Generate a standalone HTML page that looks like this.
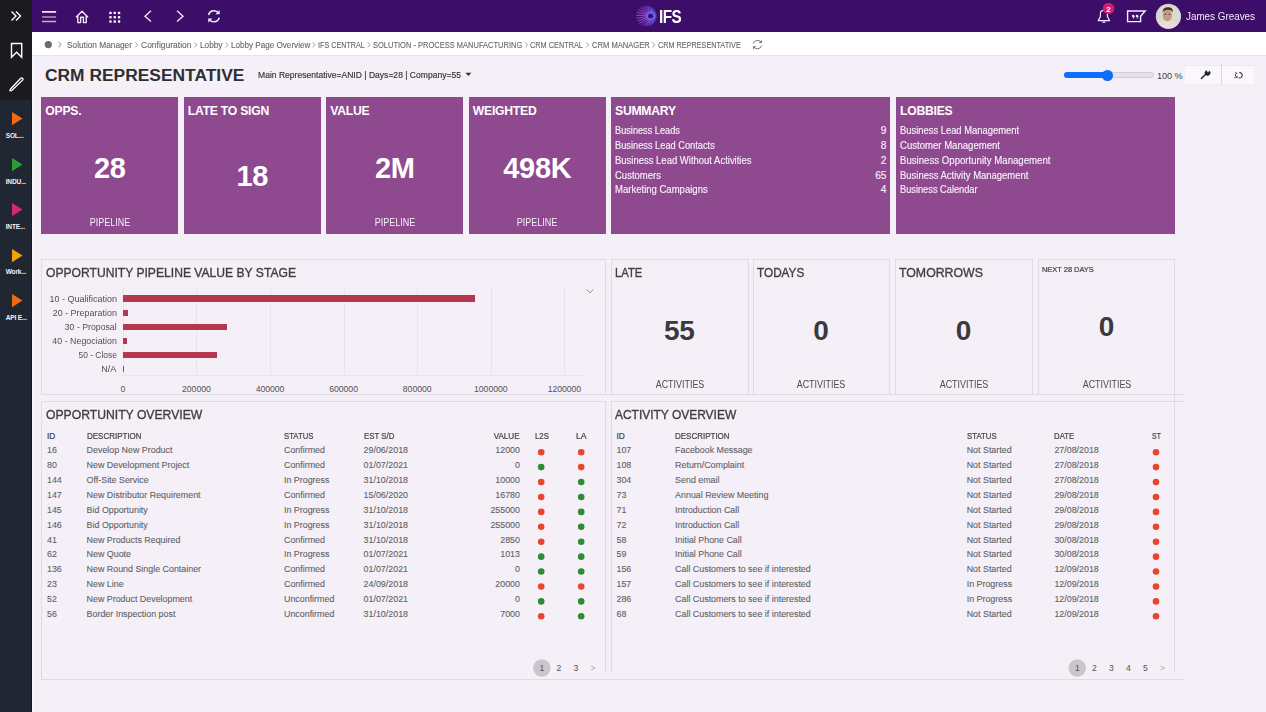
<!DOCTYPE html>
<html><head><meta charset="utf-8"><style>
*{margin:0;padding:0;box-sizing:border-box}
html,body{width:1266px;height:712px;overflow:hidden;background:#f5f0f7;font-family:"Liberation Sans",sans-serif;position:relative}
.t{position:absolute;white-space:nowrap}
.r{position:absolute}
svg{position:absolute;overflow:visible}
</style></head><body>
<div class="r" style="left:0px;top:0px;width:32px;height:712px;background:#202733;"></div>
<div class="r" style="left:31px;top:0px;width:1px;height:712px;background:#161a21;"></div>
<div class="r" style="left:0px;top:0px;width:32px;height:100px;background:#1b1b1f;"></div>
<div class="r" style="left:32px;top:0px;width:2px;height:712px;background:#f7f6f9;"></div>
<svg style="left:0;top:0" width="32" height="32"><path d="M11.5 11.5 L16 16 L11.5 20.5 M16 11.5 L20.5 16 L16 20.5" stroke="#fff" stroke-width="1.4" fill="none"/></svg>
<svg style="left:0;top:30px" width="32" height="40"><path d="M11.5 13.5 H21.7 V27.3 L16.6 22.2 L11.5 27.3 Z" stroke="#fff" stroke-width="1.4" fill="none" stroke-linejoin="miter"/></svg>
<svg style="left:0;top:70px" width="32" height="30"><path d="M10.5 19 L20.5 8.5 Q22 7.3 22.8 8.3 Q23.5 9.3 22.3 10.4 L12 20.3 L9.8 20.9 Z" stroke="#fff" stroke-width="1.3" fill="none" stroke-linejoin="round"/></svg>
<svg style="left:0;top:112.0px" width="32" height="14"><path d="M12 0 L22.5 6.6 L12 13.3 Z" fill="#f46a0f"/></svg>
<div class="t" style="top:133.00px;font-size:6.6px;line-height:6.6px;color:#f0f0f0;font-weight:bold;letter-spacing:-0.2px;left:5.70px;">SOL...</div>
<svg style="left:0;top:157.6px" width="32" height="14"><path d="M12 0 L22.5 6.6 L12 13.3 Z" fill="#2f9a3a"/></svg>
<div class="t" style="top:179.00px;font-size:6.6px;line-height:6.6px;color:#f0f0f0;font-weight:bold;letter-spacing:-0.2px;left:5.70px;">INDU...</div>
<svg style="left:0;top:203.2px" width="32" height="14"><path d="M12 0 L22.5 6.6 L12 13.3 Z" fill="#cc2a72"/></svg>
<div class="t" style="top:224.00px;font-size:6.6px;line-height:6.6px;color:#f0f0f0;font-weight:bold;letter-spacing:-0.2px;left:5.70px;">INTE...</div>
<svg style="left:0;top:248.8px" width="32" height="14"><path d="M12 0 L22.5 6.6 L12 13.3 Z" fill="#f3a20c"/></svg>
<div class="t" style="top:269.00px;font-size:6.6px;line-height:6.6px;color:#f0f0f0;font-weight:bold;letter-spacing:-0.2px;left:5.70px;">Work...</div>
<svg style="left:0;top:294.4px" width="32" height="14"><path d="M12 0 L22.5 6.6 L12 13.3 Z" fill="#f26a10"/></svg>
<div class="t" style="top:315.00px;font-size:6.6px;line-height:6.6px;color:#f0f0f0;font-weight:bold;letter-spacing:-0.2px;left:5.70px;">API E...</div>
<div class="r" style="left:32px;top:0px;width:1234px;height:32px;background:#3c0e6a;"></div>
<svg style="left:0;top:0" width="70" height="32"><path d="M42 11.9 H56.1" stroke="#efdefa" stroke-width="1.8"/><path d="M42 17 H56.1" stroke="#9580ad" stroke-width="1.8"/><path d="M42 21.5 H56.1" stroke="#c9a9e4" stroke-width="1.5"/></svg>
<svg style="left:0;top:0" width="100" height="32"><path d="M76 17.3 L82 11.2 L88 17.3 M77.8 15.8 V22.6 H80.6 V17.2 H83.4 V22.6 H86.2 V15.8" stroke="#f2ecf8" stroke-width="1.4" fill="none" stroke-linejoin="round"/></svg>
<svg style="left:0;top:0" width="130" height="32"><rect x="109.3" y="11.8" width="2.3" height="2.3" fill="#fff"/><rect x="113.6" y="11.8" width="2.3" height="2.3" fill="#fff"/><rect x="117.9" y="11.8" width="2.3" height="2.3" fill="#fff"/><rect x="109.3" y="16.1" width="2.3" height="2.3" fill="#fff"/><rect x="113.6" y="16.1" width="2.3" height="2.3" fill="#fff"/><rect x="117.9" y="16.1" width="2.3" height="2.3" fill="#fff"/><rect x="109.3" y="20.4" width="2.3" height="2.3" fill="#fff"/><rect x="113.6" y="20.4" width="2.3" height="2.3" fill="#fff"/><rect x="117.9" y="20.4" width="2.3" height="2.3" fill="#fff"/></svg>
<svg style="left:0;top:0" width="200" height="32"><path d="M151 10.8 L145 16.2 L151 21.6" stroke="#eee6f6" stroke-width="1.4" fill="none"/><path d="M177 10.8 L183 16.2 L177 21.6" stroke="#eee6f6" stroke-width="1.4" fill="none"/></svg>
<svg style="left:0;top:0" width="230" height="32"><path d="M208.5 15 A5.6 5.6 0 0 1 218.6 13.3 M219.3 17.6 A5.6 5.6 0 0 1 209.2 19.3" stroke="#f0e8f8" stroke-width="1.5" fill="none"/><path d="M219.6 10 V14.2 H215.4 Z" fill="#f0e8f8"/><path d="M208.2 22.6 V18.4 H212.4 Z" fill="#f0e8f8"/></svg>
<svg style="left:0;top:0" width="700" height="32"><line x1="653.20" y1="16.13" x2="656.50" y2="16.30" stroke="#5f6aee" stroke-width="0.9"/><line x1="653.11" y1="16.67" x2="656.38" y2="17.54" stroke="#5f6aee" stroke-width="0.9"/><line x1="652.92" y1="17.17" x2="656.11" y2="18.79" stroke="#5f6aee" stroke-width="0.9"/><line x1="652.62" y1="17.63" x2="655.65" y2="20.07" stroke="#5f6aee" stroke-width="0.9"/><line x1="652.24" y1="18.02" x2="654.97" y2="21.37" stroke="#5f6aee" stroke-width="0.9"/><line x1="651.79" y1="18.31" x2="654.02" y2="22.67" stroke="#5f6aee" stroke-width="0.9"/><line x1="651.28" y1="18.51" x2="652.74" y2="23.91" stroke="#7a58ea" stroke-width="0.9"/><line x1="650.74" y1="18.60" x2="651.09" y2="25.00" stroke="#7a58ea" stroke-width="0.9"/><line x1="650.20" y1="18.57" x2="649.07" y2="25.82" stroke="#7a58ea" stroke-width="0.9"/><line x1="649.67" y1="18.43" x2="646.72" y2="26.19" stroke="#9a4ee8" stroke-width="0.9"/><line x1="649.19" y1="18.18" x2="644.16" y2="25.97" stroke="#9a4ee8" stroke-width="0.9"/><line x1="648.77" y1="17.84" x2="641.59" y2="25.05" stroke="#9a4ee8" stroke-width="0.9"/><line x1="648.42" y1="17.42" x2="639.27" y2="23.39" stroke="#9a4ee8" stroke-width="0.9"/><line x1="648.17" y1="16.94" x2="637.46" y2="21.08" stroke="#9a4ee8" stroke-width="0.9"/><line x1="648.03" y1="16.41" x2="636.36" y2="18.29" stroke="#9a4ee8" stroke-width="0.9"/><line x1="648.00" y1="15.87" x2="636.13" y2="15.28" stroke="#9a4ee8" stroke-width="0.9"/><line x1="648.09" y1="15.33" x2="636.78" y2="12.33" stroke="#9a4ee8" stroke-width="0.9"/><line x1="648.28" y1="14.83" x2="638.25" y2="9.74" stroke="#9a4ee8" stroke-width="0.9"/><line x1="648.58" y1="14.37" x2="640.33" y2="7.73" stroke="#9a4ee8" stroke-width="0.9"/><line x1="648.96" y1="13.98" x2="642.80" y2="6.42" stroke="#9a4ee8" stroke-width="0.9"/><line x1="649.41" y1="13.69" x2="645.39" y2="5.84" stroke="#9a4ee8" stroke-width="0.9"/><line x1="649.92" y1="13.49" x2="647.87" y2="5.92" stroke="#7a58ea" stroke-width="0.9"/><line x1="650.46" y1="13.40" x2="650.08" y2="6.53" stroke="#7a58ea" stroke-width="0.9"/><line x1="651.00" y1="13.43" x2="651.93" y2="7.49" stroke="#7a58ea" stroke-width="0.9"/><line x1="651.53" y1="13.57" x2="653.39" y2="8.67" stroke="#5f6aee" stroke-width="0.9"/><line x1="652.01" y1="13.82" x2="654.51" y2="9.95" stroke="#5f6aee" stroke-width="0.9"/><line x1="652.43" y1="14.16" x2="655.33" y2="11.25" stroke="#5f6aee" stroke-width="0.9"/><line x1="652.78" y1="14.58" x2="655.90" y2="12.54" stroke="#5f6aee" stroke-width="0.9"/><line x1="653.03" y1="15.06" x2="656.26" y2="13.81" stroke="#5f6aee" stroke-width="0.9"/><line x1="653.17" y1="15.59" x2="656.46" y2="15.06" stroke="#5f6aee" stroke-width="0.9"/><circle cx="650.6" cy="16" r="3.6" fill="none" stroke="#6468ee" stroke-width="1.6"/><circle cx="650.6" cy="16" r="2.1" fill="#3c0e6a"/></svg>
<div class="t" style="top:8.00px;font-size:18px;line-height:18px;color:#fff;font-weight:bold;letter-spacing:-0.6px;left:659.00px;transform:scaleX(0.85);transform-origin:0 0;">IFS</div>
<svg style="left:0;top:0" width="1266" height="32"><path d="M1098.2 20.7 H1109.6 L1107.4 16.5 V13.6 Q1107.4 10.3 1103.9 10.3 Q1100.4 10.3 1100.4 13.6 V16.5 Z" stroke="#f4eefa" stroke-width="1.2" fill="none" stroke-linejoin="round"/><path d="M1102.4 21.6 Q1103.9 23.4 1105.4 21.6" stroke="#f4eefa" stroke-width="1.1" fill="none"/></svg>
<svg style="left:0;top:0" width="1266" height="32"><circle cx="1108.6" cy="8.5" r="5.8" fill="#d11f6e"/></svg>
<div class="t" style="top:6.00px;font-size:8px;line-height:8px;color:#fff;font-weight:bold;left:908.40px;width:400px;text-align:center;">2</div>
<svg style="left:0;top:0" width="1266" height="32"><path d="M1127.6 11 H1145.2 L1140.6 16.3 V21.6 H1127.6 Z" stroke="#f4eefa" stroke-width="1.4" fill="none"/><circle cx="1133.2" cy="16" r="1.25" fill="#f4eefa"/><circle cx="1137" cy="16" r="1.25" fill="#f4eefa"/><path d="M1134.3 16 L1133.4 18.6 M1138.1 16 L1137.2 18.6" stroke="#f4eefa" stroke-width="0.9"/></svg>
<svg style="left:0;top:0" width="1266" height="32"><defs><clipPath id="avc"><circle cx="1168.4" cy="16.4" r="12.2"/></clipPath><filter id="bl"><feGaussianBlur stdDeviation="0.7"/></filter></defs><circle cx="1168.4" cy="16.4" r="12.6" fill="#b9a9d6"/><g clip-path="url(#avc)"><rect x="1155" y="3" width="27" height="27" fill="#dcd8d0"/><g filter="url(#bl)"><rect x="1174" y="4" width="8" height="22" fill="#d6dcd2"/><ellipse cx="1167.3" cy="15.2" rx="4.6" ry="6" fill="#c49a88"/><path d="M1162.6 12.5 Q1162.5 7.3 1168 7.2 Q1173.5 7.3 1172.7 12.5 Q1171.5 9.8 1168 9.7 Q1164 9.8 1162.6 12.5Z" fill="#4a2e22"/><ellipse cx="1165.5" cy="14.2" rx="1" ry="0.6" fill="#5a3a30"/><ellipse cx="1169.5" cy="14.2" rx="1" ry="0.6" fill="#5a3a30"/><path d="M1157 32 Q1157 22.5 1163 20.5 L1167.5 22.5 L1172 20.5 Q1179 22.5 1179 32Z" fill="#ecdcd6"/></g></g></svg>
<div class="t" style="top:11.00px;font-size:10.8px;line-height:10.8px;color:#f2ecf8;left:1186.00px;transform:scaleX(0.9126);transform-origin:0 0;">James Greaves</div>
<div class="r" style="left:32px;top:32px;width:1234px;height:23px;background:#ffffff;"></div>
<div class="r" style="left:32px;top:55px;width:1234px;height:1px;background:#e6e3ea;"></div>
<svg style="left:0;top:0" width="100" height="60"><circle cx="48.3" cy="44.6" r="3.6" fill="#6b6b6f"/><path d="M58.5 42 L61.2 44.6 L58.5 47.2" stroke="#777" stroke-width="0.9" fill="none"/></svg>
<div class="t" style="top:41.00px;font-size:8.3px;line-height:8.3px;color:#666;left:67.00px;-webkit-text-stroke:0.1px currentColor;transform:scaleX(0.9993);transform-origin:0 0;">Solution Manager</div>
<div class="t" style="top:41.00px;font-size:8.3px;line-height:8.3px;color:#666;left:140.70px;-webkit-text-stroke:0.1px currentColor;transform:scaleX(1.0231);transform-origin:0 0;">Configuration</div>
<div class="t" style="top:41.00px;font-size:8.3px;line-height:8.3px;color:#666;left:200.00px;-webkit-text-stroke:0.1px currentColor;transform:scaleX(0.9952);transform-origin:0 0;">Lobby</div>
<div class="t" style="top:41.00px;font-size:8.3px;line-height:8.3px;color:#666;left:230.80px;-webkit-text-stroke:0.1px currentColor;transform:scaleX(0.9769);transform-origin:0 0;">Lobby Page Overview</div>
<div class="t" style="top:41.00px;font-size:8.3px;line-height:8.3px;color:#666;left:317.70px;-webkit-text-stroke:0.1px currentColor;transform:scaleX(0.8674);transform-origin:0 0;">IFS CENTRAL</div>
<div class="t" style="top:41.00px;font-size:8.3px;line-height:8.3px;color:#666;left:373.00px;-webkit-text-stroke:0.1px currentColor;transform:scaleX(0.9047);transform-origin:0 0;">SOLUTION - PROCESS MANUFACTURING</div>
<div class="t" style="top:41.00px;font-size:8.3px;line-height:8.3px;color:#666;left:530.30px;-webkit-text-stroke:0.1px currentColor;transform:scaleX(0.8826);transform-origin:0 0;">CRM CENTRAL</div>
<div class="t" style="top:41.00px;font-size:8.3px;line-height:8.3px;color:#666;left:591.80px;-webkit-text-stroke:0.1px currentColor;transform:scaleX(0.9152);transform-origin:0 0;">CRM MANAGER</div>
<div class="t" style="top:41.00px;font-size:8.3px;line-height:8.3px;color:#666;left:657.50px;-webkit-text-stroke:0.1px currentColor;transform:scaleX(0.8747);transform-origin:0 0;">CRM REPRESENTATIVE</div>
<svg style="left:0;top:0" width="1266" height="60"><path d="M135.2 42.2 L137.7 44.8 L135.2 47.4" stroke="#888" stroke-width="0.8" fill="none"/><path d="M194.4 42.2 L196.9 44.8 L194.4 47.4" stroke="#888" stroke-width="0.8" fill="none"/><path d="M225.5 42.2 L228.0 44.8 L225.5 47.4" stroke="#888" stroke-width="0.8" fill="none"/><path d="M312.7 42.2 L315.2 44.8 L312.7 47.4" stroke="#888" stroke-width="0.8" fill="none"/><path d="M367.6 42.2 L370.1 44.8 L367.6 47.4" stroke="#888" stroke-width="0.8" fill="none"/><path d="M525.1 42.2 L527.6 44.8 L525.1 47.4" stroke="#888" stroke-width="0.8" fill="none"/><path d="M586.3 42.2 L588.8 44.8 L586.3 47.4" stroke="#888" stroke-width="0.8" fill="none"/><path d="M652.3 42.2 L654.8 44.8 L652.3 47.4" stroke="#888" stroke-width="0.8" fill="none"/></svg>
<svg style="left:0;top:0" width="800" height="60"><path d="M753.2 43.6 A4.3 4.3 0 0 1 761 42.4 M761.6 45.6 A4.3 4.3 0 0 1 753.8 46.8" stroke="#777" stroke-width="1" fill="none"/><path d="M761.9 39.8 V43 H758.7 Z" fill="#777"/><path d="M753 49.4 V46.2 H756.2 Z" fill="#777"/></svg>
<div class="t" style="top:67.00px;font-size:17.4px;line-height:17.4px;color:#2e2e30;font-weight:bold;left:45.00px;">CRM REPRESENTATIVE</div>
<div class="t" style="top:71.00px;font-size:8.6px;line-height:8.6px;color:#333;left:258.40px;-webkit-text-stroke:0.15px currentColor;transform:scaleX(0.9956);transform-origin:0 0;">Main Representative=ANID | Days=28 | Company=55</div>
<svg style="left:0;top:0" width="500" height="90"><path d="M465.4 72.8 H471.4 L468.4 76 Z" fill="#333"/></svg>
<div class="r" style="left:1064px;top:72px;width:90px;height:6px;background:#e4e2e8;border-radius:3px;border:1px solid #d2d0d6;"></div>
<div class="r" style="left:1064px;top:72px;width:44px;height:6px;background:#0d6efd;border-radius:3px;"></div>
<div class="r" style="left:1102px;top:70px;width:10.5px;height:10.5px;background:#0d6efd;border-radius:50%;"></div>
<div class="t" style="top:72.00px;font-size:9.2px;line-height:9.2px;color:#444;letter-spacing:-0.1px;left:1157.00px;">100 %</div>
<div class="r" style="left:1185px;top:65px;width:69px;height:19.5px;background:#faf8fb;border-top:1px solid #ebe8ee;border-bottom:1px solid #efedf1;"></div>
<div class="r" style="left:1221px;top:64px;width:1px;height:21px;background:#dcd9de;"></div>
<svg style="left:0;top:0" width="1266" height="90"><path d="M1201.4 78.6 L1206.2 73.8" stroke="#222" stroke-width="1.4" stroke-linecap="round"/><path d="M1205.6 74.6 A2.5 2.5 0 0 1 1206.5 70.6 L1207.3 72.6 L1209 72.2 L1209.4 70.9 A2.5 2.5 0 0 1 1205.6 74.6 Z" fill="#222" stroke="#222" stroke-width="0.6" stroke-linejoin="round"/></svg>
<svg style="left:0;top:0" width="1266" height="90"><path d="M1239.3 72.6 A2.7 2.7 0 1 1 1238.6 77.8" stroke="#3a3a3a" stroke-width="1.1" fill="none"/><path d="M1237.2 73.2 A1.9 1.9 0 0 0 1236.6 76.9 H1238" stroke="#3a3a3a" stroke-width="1" fill="none"/><path d="M1234.3 77.6 H1237.2" stroke="#555" stroke-width="0.9"/><path d="M1235 72 L1236.6 73" stroke="#555" stroke-width="0.8"/></svg>
<div class="r" style="left:41px;top:97px;width:137px;height:136.5px;background:#8e498f;"></div>
<div class="t" style="top:105.00px;font-size:12.2px;line-height:12.2px;color:#fff;font-weight:bold;letter-spacing:-0.25px;left:45.30px;">OPPS.</div>
<div class="t" style="top:154.00px;font-size:29px;line-height:29px;color:#fff;font-weight:bold;letter-spacing:-0.3px;left:-90.20px;width:400px;text-align:center;">28</div>
<div class="t" style="top:217.00px;font-size:11.2px;line-height:11.2px;color:#f6eef8;left:-90.50px;width:400px;text-align:center;transform:scaleX(0.8040);transform-origin:50% 0;">PIPELINE</div>
<div class="r" style="left:183.5px;top:97px;width:137.0px;height:136.5px;background:#8e498f;"></div>
<div class="t" style="top:105.00px;font-size:12.2px;line-height:12.2px;color:#fff;font-weight:bold;letter-spacing:-0.25px;left:187.80px;">LATE TO SIGN</div>
<div class="t" style="top:162.00px;font-size:29px;line-height:29px;color:#fff;font-weight:bold;letter-spacing:-0.3px;left:52.30px;width:400px;text-align:center;">18</div>
<div class="r" style="left:326px;top:97px;width:137px;height:136.5px;background:#8e498f;"></div>
<div class="t" style="top:105.00px;font-size:12.2px;line-height:12.2px;color:#fff;font-weight:bold;letter-spacing:-0.25px;left:330.30px;">VALUE</div>
<div class="t" style="top:154.00px;font-size:29px;line-height:29px;color:#fff;font-weight:bold;letter-spacing:-0.3px;left:194.80px;width:400px;text-align:center;">2M</div>
<div class="t" style="top:217.00px;font-size:11.2px;line-height:11.2px;color:#f6eef8;left:194.50px;width:400px;text-align:center;transform:scaleX(0.8040);transform-origin:50% 0;">PIPELINE</div>
<div class="r" style="left:468.5px;top:97px;width:137.0px;height:136.5px;background:#8e498f;"></div>
<div class="t" style="top:105.00px;font-size:12.2px;line-height:12.2px;color:#fff;font-weight:bold;letter-spacing:-0.25px;left:472.80px;">WEIGHTED</div>
<div class="t" style="top:154.00px;font-size:29px;line-height:29px;color:#fff;font-weight:bold;letter-spacing:-0.3px;left:337.30px;width:400px;text-align:center;">498K</div>
<div class="t" style="top:217.00px;font-size:11.2px;line-height:11.2px;color:#f6eef8;left:337.00px;width:400px;text-align:center;transform:scaleX(0.8040);transform-origin:50% 0;">PIPELINE</div>
<div class="r" style="left:611px;top:97px;width:279px;height:136.5px;background:#8e498f;"></div>
<div class="t" style="top:105.00px;font-size:12.2px;line-height:12.2px;color:#fff;font-weight:bold;letter-spacing:-0.25px;left:615.00px;">SUMMARY</div>
<div class="t" style="top:126.00px;font-size:10.2px;line-height:10.2px;color:#f7f0f9;left:614.70px;-webkit-text-stroke:0.15px currentColor;transform:scaleX(0.9022);transform-origin:0 0;">Business Leads</div>
<div class="t" style="top:126.00px;font-size:10.2px;line-height:10.2px;color:#f7f0f9;right:379.50px;text-align:right;-webkit-text-stroke:0.15px currentColor;">9</div>
<div class="t" style="top:141.00px;font-size:10.2px;line-height:10.2px;color:#f7f0f9;left:614.70px;-webkit-text-stroke:0.15px currentColor;transform:scaleX(0.9083);transform-origin:0 0;">Business Lead Contacts</div>
<div class="t" style="top:141.00px;font-size:10.2px;line-height:10.2px;color:#f7f0f9;right:379.50px;text-align:right;-webkit-text-stroke:0.15px currentColor;">8</div>
<div class="t" style="top:156.00px;font-size:10.2px;line-height:10.2px;color:#f7f0f9;left:614.70px;-webkit-text-stroke:0.15px currentColor;transform:scaleX(0.9306);transform-origin:0 0;">Business Lead Without Activities</div>
<div class="t" style="top:156.00px;font-size:10.2px;line-height:10.2px;color:#f7f0f9;right:379.50px;text-align:right;-webkit-text-stroke:0.15px currentColor;">2</div>
<div class="t" style="top:171.00px;font-size:10.2px;line-height:10.2px;color:#f7f0f9;left:614.70px;-webkit-text-stroke:0.15px currentColor;transform:scaleX(0.9337);transform-origin:0 0;">Customers</div>
<div class="t" style="top:171.00px;font-size:10.2px;line-height:10.2px;color:#f7f0f9;right:379.50px;text-align:right;-webkit-text-stroke:0.15px currentColor;">65</div>
<div class="t" style="top:185.00px;font-size:10.2px;line-height:10.2px;color:#f7f0f9;left:614.70px;-webkit-text-stroke:0.15px currentColor;transform:scaleX(0.9355);transform-origin:0 0;">Marketing Campaigns</div>
<div class="t" style="top:185.00px;font-size:10.2px;line-height:10.2px;color:#f7f0f9;right:379.50px;text-align:right;-webkit-text-stroke:0.15px currentColor;">4</div>
<div class="r" style="left:896px;top:97px;width:279px;height:136.5px;background:#8e498f;"></div>
<div class="t" style="top:105.00px;font-size:12.2px;line-height:12.2px;color:#fff;font-weight:bold;letter-spacing:-0.25px;left:900.00px;">LOBBIES</div>
<div class="t" style="top:126.00px;font-size:10.2px;line-height:10.2px;color:#f7f0f9;left:899.80px;-webkit-text-stroke:0.15px currentColor;transform:scaleX(0.9216);transform-origin:0 0;">Business Lead Management</div>
<div class="t" style="top:141.00px;font-size:10.2px;line-height:10.2px;color:#f7f0f9;left:899.80px;-webkit-text-stroke:0.15px currentColor;transform:scaleX(0.9394);transform-origin:0 0;">Customer Management</div>
<div class="t" style="top:156.00px;font-size:10.2px;line-height:10.2px;color:#f7f0f9;left:899.80px;-webkit-text-stroke:0.15px currentColor;transform:scaleX(0.9458);transform-origin:0 0;">Business Opportunity Management</div>
<div class="t" style="top:171.00px;font-size:10.2px;line-height:10.2px;color:#f7f0f9;left:899.80px;-webkit-text-stroke:0.15px currentColor;transform:scaleX(0.9293);transform-origin:0 0;">Business Activity Management</div>
<div class="t" style="top:185.00px;font-size:10.2px;line-height:10.2px;color:#f7f0f9;left:899.80px;-webkit-text-stroke:0.15px currentColor;transform:scaleX(0.9074);transform-origin:0 0;">Business Calendar</div>
<div class="r" style="left:41px;top:259px;width:565px;height:1px;background:#dfdbe3;"></div>
<div class="r" style="left:41px;top:259px;width:1px;height:136px;background:#dfdbe3;"></div>
<div class="r" style="left:605px;top:259px;width:1px;height:136px;background:#dfdbe3;"></div>
<div class="r" style="left:611px;top:259px;width:138px;height:1px;background:#dfdbe3;"></div>
<div class="r" style="left:611px;top:259px;width:1px;height:136px;background:#dfdbe3;"></div>
<div class="r" style="left:748px;top:259px;width:1px;height:136px;background:#dfdbe3;"></div>
<div class="r" style="left:753px;top:259px;width:137px;height:1px;background:#dfdbe3;"></div>
<div class="r" style="left:753px;top:259px;width:1px;height:136px;background:#dfdbe3;"></div>
<div class="r" style="left:889px;top:259px;width:1px;height:136px;background:#dfdbe3;"></div>
<div class="r" style="left:895px;top:259px;width:138px;height:1px;background:#dfdbe3;"></div>
<div class="r" style="left:895px;top:259px;width:1px;height:136px;background:#dfdbe3;"></div>
<div class="r" style="left:1032px;top:259px;width:1px;height:136px;background:#dfdbe3;"></div>
<div class="r" style="left:1038px;top:259px;width:137px;height:1px;background:#dfdbe3;"></div>
<div class="r" style="left:1038px;top:259px;width:1px;height:136px;background:#dfdbe3;"></div>
<div class="r" style="left:1174px;top:259px;width:1px;height:136px;background:#dfdbe3;"></div>
<div class="r" style="left:41px;top:394px;width:1143px;height:1px;background:#dfdbe3;"></div>
<div class="r" style="left:606px;top:394px;width:5px;height:1px;background:#dfdbe3;"></div>
<div class="t" style="top:267.00px;font-size:12.6px;line-height:12.6px;color:#3f3f42;left:45.60px;-webkit-text-stroke:0.35px currentColor;transform:scaleX(0.9619);transform-origin:0 0;">OPPORTUNITY PIPELINE VALUE BY STAGE</div>
<div class="r" style="left:123px;top:288px;width:1px;height:87px;background:#e7e3ea;"></div>
<div class="r" style="left:196px;top:288px;width:1px;height:87px;background:#e7e3ea;"></div>
<div class="r" style="left:270px;top:288px;width:1px;height:87px;background:#e7e3ea;"></div>
<div class="r" style="left:344px;top:288px;width:1px;height:87px;background:#e7e3ea;"></div>
<div class="r" style="left:417px;top:288px;width:1px;height:87px;background:#e7e3ea;"></div>
<div class="r" style="left:491px;top:288px;width:1px;height:87px;background:#e7e3ea;"></div>
<div class="r" style="left:564px;top:288px;width:1px;height:87px;background:#e7e3ea;"></div>
<div class="r" style="left:122px;top:375px;width:462px;height:1px;background:#e9e5ec;"></div>
<div class="r" style="left:122.8px;top:295.4px;width:352.2px;height:6.2px;background:#b7354f;"></div>
<div class="t" style="top:295.00px;font-size:9.2px;line-height:9.2px;color:#505055;right:1149.50px;text-align:right;transform:scaleX(0.9789);transform-origin:100% 0;">10 - Qualification</div>
<div class="r" style="left:122.8px;top:309.5px;width:5.0px;height:6.2px;background:#b7354f;"></div>
<div class="t" style="top:309.00px;font-size:9.2px;line-height:9.2px;color:#505055;right:1149.50px;text-align:right;transform:scaleX(0.9743);transform-origin:100% 0;">20 - Preparation</div>
<div class="r" style="left:122.8px;top:323.59999999999997px;width:104.00000000000001px;height:6.2px;background:#b7354f;"></div>
<div class="t" style="top:323.00px;font-size:9.2px;line-height:9.2px;color:#505055;right:1149.50px;text-align:right;transform:scaleX(0.9496);transform-origin:100% 0;">30 - Proposal</div>
<div class="r" style="left:122.8px;top:337.7px;width:4.400000000000006px;height:6.2px;background:#b7354f;"></div>
<div class="t" style="top:337.00px;font-size:9.2px;line-height:9.2px;color:#505055;right:1149.50px;text-align:right;transform:scaleX(0.9655);transform-origin:100% 0;">40 - Negociation</div>
<div class="r" style="left:122.8px;top:351.79999999999995px;width:94.60000000000001px;height:6.2px;background:#b7354f;"></div>
<div class="t" style="top:351.00px;font-size:9.2px;line-height:9.2px;color:#505055;right:1149.50px;text-align:right;transform:scaleX(0.9170);transform-origin:100% 0;">50 - Close</div>
<div class="r" style="left:122.8px;top:365.9px;width:1.5px;height:6.2px;background:#b7354f;"></div>
<div class="t" style="top:365.00px;font-size:9.2px;line-height:9.2px;color:#505055;right:1149.50px;text-align:right;transform:scaleX(0.9916);transform-origin:100% 0;">N/A</div>
<div class="t" style="top:385.00px;font-size:8.7px;line-height:8.7px;color:#505055;letter-spacing:-0.05px;left:-77.20px;width:400px;text-align:center;">0</div>
<div class="t" style="top:385.00px;font-size:8.7px;line-height:8.7px;color:#505055;letter-spacing:-0.05px;left:-3.60px;width:400px;text-align:center;">200000</div>
<div class="t" style="top:385.00px;font-size:8.7px;line-height:8.7px;color:#505055;letter-spacing:-0.05px;left:70.00px;width:400px;text-align:center;">400000</div>
<div class="t" style="top:385.00px;font-size:8.7px;line-height:8.7px;color:#505055;letter-spacing:-0.05px;left:143.60px;width:400px;text-align:center;">600000</div>
<div class="t" style="top:385.00px;font-size:8.7px;line-height:8.7px;color:#505055;letter-spacing:-0.05px;left:217.20px;width:400px;text-align:center;">800000</div>
<div class="t" style="top:385.00px;font-size:8.7px;line-height:8.7px;color:#505055;letter-spacing:-0.05px;left:290.80px;width:400px;text-align:center;">1000000</div>
<div class="t" style="top:385.00px;font-size:8.7px;line-height:8.7px;color:#505055;letter-spacing:-0.05px;left:364.40px;width:400px;text-align:center;">1200000</div>
<svg style="left:0;top:0" width="1266" height="400"><path d="M586.6 289.6 L590 292.8 L593.4 289.6" stroke="#888" stroke-width="0.9" fill="none"/></svg>
<div class="t" style="top:267.00px;font-size:12.6px;line-height:12.6px;color:#3f3f42;left:615.00px;-webkit-text-stroke:0.35px currentColor;transform:scaleX(0.8933);transform-origin:0 0;">LATE</div>
<div class="t" style="top:317.00px;font-size:28px;line-height:28px;color:#3a3a3e;font-weight:bold;letter-spacing:-0.3px;left:479.25px;width:400px;text-align:center;">55</div>
<div class="t" style="top:380.00px;font-size:10px;line-height:10px;color:#4a4a4e;left:479.55px;width:400px;text-align:center;transform:scaleX(0.8925);transform-origin:50% 0;">ACTIVITIES</div>
<div class="t" style="top:267.00px;font-size:12.6px;line-height:12.6px;color:#3f3f42;left:757.00px;-webkit-text-stroke:0.35px currentColor;transform:scaleX(0.9343);transform-origin:0 0;">TODAYS</div>
<div class="t" style="top:317.00px;font-size:28px;line-height:28px;color:#3a3a3e;font-weight:bold;letter-spacing:-0.3px;left:621.00px;width:400px;text-align:center;">0</div>
<div class="t" style="top:380.00px;font-size:10px;line-height:10px;color:#4a4a4e;left:621.30px;width:400px;text-align:center;transform:scaleX(0.8925);transform-origin:50% 0;">ACTIVITIES</div>
<div class="t" style="top:267.00px;font-size:12.6px;line-height:12.6px;color:#3f3f42;left:899.00px;-webkit-text-stroke:0.35px currentColor;transform:scaleX(0.9775);transform-origin:0 0;">TOMORROWS</div>
<div class="t" style="top:317.00px;font-size:28px;line-height:28px;color:#3a3a3e;font-weight:bold;letter-spacing:-0.3px;left:763.50px;width:400px;text-align:center;">0</div>
<div class="t" style="top:380.00px;font-size:10px;line-height:10px;color:#4a4a4e;left:763.80px;width:400px;text-align:center;transform:scaleX(0.8925);transform-origin:50% 0;">ACTIVITIES</div>
<div class="t" style="top:266.00px;font-size:7.6px;line-height:7.6px;color:#444;left:1042.20px;-webkit-text-stroke:0.22px currentColor;transform:scaleX(0.9791);transform-origin:0 0;">NEXT 28 DAYS</div>
<div class="t" style="top:313.00px;font-size:28px;line-height:28px;color:#3a3a3e;font-weight:bold;letter-spacing:-0.3px;left:906.50px;width:400px;text-align:center;">0</div>
<div class="t" style="top:380.00px;font-size:10px;line-height:10px;color:#4a4a4e;left:906.50px;width:400px;text-align:center;transform:scaleX(0.8925);transform-origin:50% 0;">ACTIVITIES</div>
<div class="r" style="left:41px;top:401px;width:565px;height:1px;background:#dfdbe3;"></div>
<div class="r" style="left:611px;top:401px;width:573px;height:1px;background:#dfdbe3;"></div>
<div class="r" style="left:41px;top:401px;width:1px;height:279px;background:#dfdbe3;"></div>
<div class="r" style="left:605px;top:401px;width:1px;height:271px;background:#dfdbe3;"></div>
<div class="r" style="left:611px;top:401px;width:1px;height:271px;background:#dfdbe3;"></div>
<div class="r" style="left:1174px;top:259px;width:1px;height:413px;background:#dfdbe3;"></div>
<div class="r" style="left:41px;top:679px;width:1143px;height:1px;background:#dfdbe3;"></div>
<div class="t" style="top:409.00px;font-size:12.6px;line-height:12.6px;color:#3f3f42;left:45.50px;-webkit-text-stroke:0.35px currentColor;transform:scaleX(0.9669);transform-origin:0 0;">OPPORTUNITY OVERVIEW</div>
<div class="t" style="top:409.00px;font-size:12.6px;line-height:12.6px;color:#3f3f42;left:615.00px;-webkit-text-stroke:0.35px currentColor;transform:scaleX(0.9498);transform-origin:0 0;">ACTIVITY OVERVIEW</div>
<div class="t" style="top:432.00px;font-size:8.3px;line-height:8.3px;color:#474749;left:47.00px;-webkit-text-stroke:0.22px currentColor;">ID</div>
<div class="t" style="top:432.00px;font-size:8.3px;line-height:8.3px;color:#474749;left:86.80px;-webkit-text-stroke:0.22px currentColor;transform:scaleX(0.9629);transform-origin:0 0;">DESCRIPTION</div>
<div class="t" style="top:432.00px;font-size:8.3px;line-height:8.3px;color:#474749;left:284.00px;-webkit-text-stroke:0.22px currentColor;transform:scaleX(0.9333);transform-origin:0 0;">STATUS</div>
<div class="t" style="top:432.00px;font-size:8.3px;line-height:8.3px;color:#474749;left:363.60px;-webkit-text-stroke:0.22px currentColor;transform:scaleX(0.9432);transform-origin:0 0;">EST S/D</div>
<div class="t" style="top:432.00px;font-size:8.3px;line-height:8.3px;color:#474749;right:746.00px;text-align:right;-webkit-text-stroke:0.22px currentColor;transform:scaleX(0.9739);transform-origin:100% 0;">VALUE</div>
<div class="t" style="top:432.00px;font-size:8.3px;line-height:8.3px;color:#474749;left:534.50px;-webkit-text-stroke:0.22px currentColor;transform:scaleX(0.9481);transform-origin:0 0;">L2S</div>
<div class="t" style="top:432.00px;font-size:8.3px;line-height:8.3px;color:#474749;left:576.30px;-webkit-text-stroke:0.22px currentColor;transform:scaleX(1.0535);transform-origin:0 0;">LA</div>
<div class="t" style="top:446.00px;font-size:8.9px;line-height:8.9px;color:#616165;left:47.00px;-webkit-text-stroke:0.1px currentColor;">16</div>
<div class="t" style="top:446.00px;font-size:8.9px;line-height:8.9px;color:#616165;left:86.60px;-webkit-text-stroke:0.1px currentColor;">Develop New Product</div>
<div class="t" style="top:446.00px;font-size:8.9px;line-height:8.9px;color:#616165;left:284.00px;-webkit-text-stroke:0.1px currentColor;">Confirmed</div>
<div class="t" style="top:446.00px;font-size:8.9px;line-height:8.9px;color:#616165;left:363.60px;-webkit-text-stroke:0.1px currentColor;">29/06/2018</div>
<div class="t" style="top:446.00px;font-size:8.9px;line-height:8.9px;color:#616165;right:746.00px;text-align:right;-webkit-text-stroke:0.1px currentColor;">12000</div>
<div class="t" style="top:461.00px;font-size:8.9px;line-height:8.9px;color:#616165;left:47.00px;-webkit-text-stroke:0.1px currentColor;">80</div>
<div class="t" style="top:461.00px;font-size:8.9px;line-height:8.9px;color:#616165;left:86.60px;-webkit-text-stroke:0.1px currentColor;">New Development Project</div>
<div class="t" style="top:461.00px;font-size:8.9px;line-height:8.9px;color:#616165;left:284.00px;-webkit-text-stroke:0.1px currentColor;">Confirmed</div>
<div class="t" style="top:461.00px;font-size:8.9px;line-height:8.9px;color:#616165;left:363.60px;-webkit-text-stroke:0.1px currentColor;">01/07/2021</div>
<div class="t" style="top:461.00px;font-size:8.9px;line-height:8.9px;color:#616165;right:746.00px;text-align:right;-webkit-text-stroke:0.1px currentColor;">0</div>
<div class="t" style="top:476.00px;font-size:8.9px;line-height:8.9px;color:#616165;left:47.00px;-webkit-text-stroke:0.1px currentColor;">144</div>
<div class="t" style="top:476.00px;font-size:8.9px;line-height:8.9px;color:#616165;left:86.60px;-webkit-text-stroke:0.1px currentColor;">Off-Site Service</div>
<div class="t" style="top:476.00px;font-size:8.9px;line-height:8.9px;color:#616165;left:284.00px;-webkit-text-stroke:0.1px currentColor;">In Progress</div>
<div class="t" style="top:476.00px;font-size:8.9px;line-height:8.9px;color:#616165;left:363.60px;-webkit-text-stroke:0.1px currentColor;">31/10/2018</div>
<div class="t" style="top:476.00px;font-size:8.9px;line-height:8.9px;color:#616165;right:746.00px;text-align:right;-webkit-text-stroke:0.1px currentColor;">10000</div>
<div class="t" style="top:491.00px;font-size:8.9px;line-height:8.9px;color:#616165;left:47.00px;-webkit-text-stroke:0.1px currentColor;">147</div>
<div class="t" style="top:491.00px;font-size:8.9px;line-height:8.9px;color:#616165;left:86.60px;-webkit-text-stroke:0.1px currentColor;">New Distributor Requirement</div>
<div class="t" style="top:491.00px;font-size:8.9px;line-height:8.9px;color:#616165;left:284.00px;-webkit-text-stroke:0.1px currentColor;">Confirmed</div>
<div class="t" style="top:491.00px;font-size:8.9px;line-height:8.9px;color:#616165;left:363.60px;-webkit-text-stroke:0.1px currentColor;">15/06/2020</div>
<div class="t" style="top:491.00px;font-size:8.9px;line-height:8.9px;color:#616165;right:746.00px;text-align:right;-webkit-text-stroke:0.1px currentColor;">16780</div>
<div class="t" style="top:506.00px;font-size:8.9px;line-height:8.9px;color:#616165;left:47.00px;-webkit-text-stroke:0.1px currentColor;">145</div>
<div class="t" style="top:506.00px;font-size:8.9px;line-height:8.9px;color:#616165;left:86.60px;-webkit-text-stroke:0.1px currentColor;">Bid Opportunity</div>
<div class="t" style="top:506.00px;font-size:8.9px;line-height:8.9px;color:#616165;left:284.00px;-webkit-text-stroke:0.1px currentColor;">In Progress</div>
<div class="t" style="top:506.00px;font-size:8.9px;line-height:8.9px;color:#616165;left:363.60px;-webkit-text-stroke:0.1px currentColor;">31/10/2018</div>
<div class="t" style="top:506.00px;font-size:8.9px;line-height:8.9px;color:#616165;right:746.00px;text-align:right;-webkit-text-stroke:0.1px currentColor;">255000</div>
<div class="t" style="top:521.00px;font-size:8.9px;line-height:8.9px;color:#616165;left:47.00px;-webkit-text-stroke:0.1px currentColor;">146</div>
<div class="t" style="top:521.00px;font-size:8.9px;line-height:8.9px;color:#616165;left:86.60px;-webkit-text-stroke:0.1px currentColor;">Bid Opportunity</div>
<div class="t" style="top:521.00px;font-size:8.9px;line-height:8.9px;color:#616165;left:284.00px;-webkit-text-stroke:0.1px currentColor;">In Progress</div>
<div class="t" style="top:521.00px;font-size:8.9px;line-height:8.9px;color:#616165;left:363.60px;-webkit-text-stroke:0.1px currentColor;">31/10/2018</div>
<div class="t" style="top:521.00px;font-size:8.9px;line-height:8.9px;color:#616165;right:746.00px;text-align:right;-webkit-text-stroke:0.1px currentColor;">255000</div>
<div class="t" style="top:536.00px;font-size:8.9px;line-height:8.9px;color:#616165;left:47.00px;-webkit-text-stroke:0.1px currentColor;">41</div>
<div class="t" style="top:536.00px;font-size:8.9px;line-height:8.9px;color:#616165;left:86.60px;-webkit-text-stroke:0.1px currentColor;">New Products Required</div>
<div class="t" style="top:536.00px;font-size:8.9px;line-height:8.9px;color:#616165;left:284.00px;-webkit-text-stroke:0.1px currentColor;">Confirmed</div>
<div class="t" style="top:536.00px;font-size:8.9px;line-height:8.9px;color:#616165;left:363.60px;-webkit-text-stroke:0.1px currentColor;">31/10/2018</div>
<div class="t" style="top:536.00px;font-size:8.9px;line-height:8.9px;color:#616165;right:746.00px;text-align:right;-webkit-text-stroke:0.1px currentColor;">2850</div>
<div class="t" style="top:550.00px;font-size:8.9px;line-height:8.9px;color:#616165;left:47.00px;-webkit-text-stroke:0.1px currentColor;">62</div>
<div class="t" style="top:550.00px;font-size:8.9px;line-height:8.9px;color:#616165;left:86.60px;-webkit-text-stroke:0.1px currentColor;">New Quote</div>
<div class="t" style="top:550.00px;font-size:8.9px;line-height:8.9px;color:#616165;left:284.00px;-webkit-text-stroke:0.1px currentColor;">In Progress</div>
<div class="t" style="top:550.00px;font-size:8.9px;line-height:8.9px;color:#616165;left:363.60px;-webkit-text-stroke:0.1px currentColor;">01/07/2021</div>
<div class="t" style="top:550.00px;font-size:8.9px;line-height:8.9px;color:#616165;right:746.00px;text-align:right;-webkit-text-stroke:0.1px currentColor;">1013</div>
<div class="t" style="top:565.00px;font-size:8.9px;line-height:8.9px;color:#616165;left:47.00px;-webkit-text-stroke:0.1px currentColor;">136</div>
<div class="t" style="top:565.00px;font-size:8.9px;line-height:8.9px;color:#616165;left:86.60px;-webkit-text-stroke:0.1px currentColor;">New Round Single Container</div>
<div class="t" style="top:565.00px;font-size:8.9px;line-height:8.9px;color:#616165;left:284.00px;-webkit-text-stroke:0.1px currentColor;">Confirmed</div>
<div class="t" style="top:565.00px;font-size:8.9px;line-height:8.9px;color:#616165;left:363.60px;-webkit-text-stroke:0.1px currentColor;">01/07/2021</div>
<div class="t" style="top:565.00px;font-size:8.9px;line-height:8.9px;color:#616165;right:746.00px;text-align:right;-webkit-text-stroke:0.1px currentColor;">0</div>
<div class="t" style="top:580.00px;font-size:8.9px;line-height:8.9px;color:#616165;left:47.00px;-webkit-text-stroke:0.1px currentColor;">23</div>
<div class="t" style="top:580.00px;font-size:8.9px;line-height:8.9px;color:#616165;left:86.60px;-webkit-text-stroke:0.1px currentColor;">New Line</div>
<div class="t" style="top:580.00px;font-size:8.9px;line-height:8.9px;color:#616165;left:284.00px;-webkit-text-stroke:0.1px currentColor;">Confirmed</div>
<div class="t" style="top:580.00px;font-size:8.9px;line-height:8.9px;color:#616165;left:363.60px;-webkit-text-stroke:0.1px currentColor;">24/09/2018</div>
<div class="t" style="top:580.00px;font-size:8.9px;line-height:8.9px;color:#616165;right:746.00px;text-align:right;-webkit-text-stroke:0.1px currentColor;">20000</div>
<div class="t" style="top:595.00px;font-size:8.9px;line-height:8.9px;color:#616165;left:47.00px;-webkit-text-stroke:0.1px currentColor;">52</div>
<div class="t" style="top:595.00px;font-size:8.9px;line-height:8.9px;color:#616165;left:86.60px;-webkit-text-stroke:0.1px currentColor;">New Product Development</div>
<div class="t" style="top:595.00px;font-size:8.9px;line-height:8.9px;color:#616165;left:284.00px;-webkit-text-stroke:0.1px currentColor;">Unconfirmed</div>
<div class="t" style="top:595.00px;font-size:8.9px;line-height:8.9px;color:#616165;left:363.60px;-webkit-text-stroke:0.1px currentColor;">01/07/2021</div>
<div class="t" style="top:595.00px;font-size:8.9px;line-height:8.9px;color:#616165;right:746.00px;text-align:right;-webkit-text-stroke:0.1px currentColor;">0</div>
<div class="t" style="top:610.00px;font-size:8.9px;line-height:8.9px;color:#616165;left:47.00px;-webkit-text-stroke:0.1px currentColor;">56</div>
<div class="t" style="top:610.00px;font-size:8.9px;line-height:8.9px;color:#616165;left:86.60px;-webkit-text-stroke:0.1px currentColor;">Border Inspection post</div>
<div class="t" style="top:610.00px;font-size:8.9px;line-height:8.9px;color:#616165;left:284.00px;-webkit-text-stroke:0.1px currentColor;">Unconfirmed</div>
<div class="t" style="top:610.00px;font-size:8.9px;line-height:8.9px;color:#616165;left:363.60px;-webkit-text-stroke:0.1px currentColor;">31/10/2018</div>
<div class="t" style="top:610.00px;font-size:8.9px;line-height:8.9px;color:#616165;right:746.00px;text-align:right;-webkit-text-stroke:0.1px currentColor;">7000</div>
<div class="t" style="top:432.00px;font-size:8.3px;line-height:8.3px;color:#474749;left:616.50px;-webkit-text-stroke:0.22px currentColor;">ID</div>
<div class="t" style="top:432.00px;font-size:8.3px;line-height:8.3px;color:#474749;left:675.30px;-webkit-text-stroke:0.22px currentColor;transform:scaleX(0.9629);transform-origin:0 0;">DESCRIPTION</div>
<div class="t" style="top:432.00px;font-size:8.3px;line-height:8.3px;color:#474749;left:966.70px;-webkit-text-stroke:0.22px currentColor;transform:scaleX(0.9397);transform-origin:0 0;">STATUS</div>
<div class="t" style="top:432.00px;font-size:8.3px;line-height:8.3px;color:#474749;left:1054.40px;-webkit-text-stroke:0.22px currentColor;transform:scaleX(0.9389);transform-origin:0 0;">DATE</div>
<div class="t" style="top:432.00px;font-size:8.3px;line-height:8.3px;color:#474749;left:1151.60px;-webkit-text-stroke:0.22px currentColor;transform:scaleX(0.8389);transform-origin:0 0;">ST</div>
<div class="t" style="top:446.00px;font-size:8.9px;line-height:8.9px;color:#616165;left:616.50px;-webkit-text-stroke:0.1px currentColor;">107</div>
<div class="t" style="top:446.00px;font-size:8.9px;line-height:8.9px;color:#616165;left:675.10px;-webkit-text-stroke:0.1px currentColor;">Facebook Message</div>
<div class="t" style="top:446.00px;font-size:8.9px;line-height:8.9px;color:#616165;left:966.70px;-webkit-text-stroke:0.1px currentColor;">Not Started</div>
<div class="t" style="top:446.00px;font-size:8.9px;line-height:8.9px;color:#616165;left:1054.40px;-webkit-text-stroke:0.1px currentColor;">27/08/2018</div>
<div class="t" style="top:461.00px;font-size:8.9px;line-height:8.9px;color:#616165;left:616.50px;-webkit-text-stroke:0.1px currentColor;">108</div>
<div class="t" style="top:461.00px;font-size:8.9px;line-height:8.9px;color:#616165;left:675.10px;-webkit-text-stroke:0.1px currentColor;">Return/Complaint</div>
<div class="t" style="top:461.00px;font-size:8.9px;line-height:8.9px;color:#616165;left:966.70px;-webkit-text-stroke:0.1px currentColor;">Not Started</div>
<div class="t" style="top:461.00px;font-size:8.9px;line-height:8.9px;color:#616165;left:1054.40px;-webkit-text-stroke:0.1px currentColor;">27/08/2018</div>
<div class="t" style="top:476.00px;font-size:8.9px;line-height:8.9px;color:#616165;left:616.50px;-webkit-text-stroke:0.1px currentColor;">304</div>
<div class="t" style="top:476.00px;font-size:8.9px;line-height:8.9px;color:#616165;left:675.10px;-webkit-text-stroke:0.1px currentColor;">Send email</div>
<div class="t" style="top:476.00px;font-size:8.9px;line-height:8.9px;color:#616165;left:966.70px;-webkit-text-stroke:0.1px currentColor;">Not Started</div>
<div class="t" style="top:476.00px;font-size:8.9px;line-height:8.9px;color:#616165;left:1054.40px;-webkit-text-stroke:0.1px currentColor;">27/08/2018</div>
<div class="t" style="top:491.00px;font-size:8.9px;line-height:8.9px;color:#616165;left:616.50px;-webkit-text-stroke:0.1px currentColor;">73</div>
<div class="t" style="top:491.00px;font-size:8.9px;line-height:8.9px;color:#616165;left:675.10px;-webkit-text-stroke:0.1px currentColor;">Annual Review Meeting</div>
<div class="t" style="top:491.00px;font-size:8.9px;line-height:8.9px;color:#616165;left:966.70px;-webkit-text-stroke:0.1px currentColor;">Not Started</div>
<div class="t" style="top:491.00px;font-size:8.9px;line-height:8.9px;color:#616165;left:1054.40px;-webkit-text-stroke:0.1px currentColor;">29/08/2018</div>
<div class="t" style="top:506.00px;font-size:8.9px;line-height:8.9px;color:#616165;left:616.50px;-webkit-text-stroke:0.1px currentColor;">71</div>
<div class="t" style="top:506.00px;font-size:8.9px;line-height:8.9px;color:#616165;left:675.10px;-webkit-text-stroke:0.1px currentColor;">Introduction Call</div>
<div class="t" style="top:506.00px;font-size:8.9px;line-height:8.9px;color:#616165;left:966.70px;-webkit-text-stroke:0.1px currentColor;">Not Started</div>
<div class="t" style="top:506.00px;font-size:8.9px;line-height:8.9px;color:#616165;left:1054.40px;-webkit-text-stroke:0.1px currentColor;">29/08/2018</div>
<div class="t" style="top:521.00px;font-size:8.9px;line-height:8.9px;color:#616165;left:616.50px;-webkit-text-stroke:0.1px currentColor;">72</div>
<div class="t" style="top:521.00px;font-size:8.9px;line-height:8.9px;color:#616165;left:675.10px;-webkit-text-stroke:0.1px currentColor;">Introduction Call</div>
<div class="t" style="top:521.00px;font-size:8.9px;line-height:8.9px;color:#616165;left:966.70px;-webkit-text-stroke:0.1px currentColor;">Not Started</div>
<div class="t" style="top:521.00px;font-size:8.9px;line-height:8.9px;color:#616165;left:1054.40px;-webkit-text-stroke:0.1px currentColor;">29/08/2018</div>
<div class="t" style="top:536.00px;font-size:8.9px;line-height:8.9px;color:#616165;left:616.50px;-webkit-text-stroke:0.1px currentColor;">58</div>
<div class="t" style="top:536.00px;font-size:8.9px;line-height:8.9px;color:#616165;left:675.10px;-webkit-text-stroke:0.1px currentColor;">Initial Phone Call</div>
<div class="t" style="top:536.00px;font-size:8.9px;line-height:8.9px;color:#616165;left:966.70px;-webkit-text-stroke:0.1px currentColor;">Not Started</div>
<div class="t" style="top:536.00px;font-size:8.9px;line-height:8.9px;color:#616165;left:1054.40px;-webkit-text-stroke:0.1px currentColor;">30/08/2018</div>
<div class="t" style="top:550.00px;font-size:8.9px;line-height:8.9px;color:#616165;left:616.50px;-webkit-text-stroke:0.1px currentColor;">59</div>
<div class="t" style="top:550.00px;font-size:8.9px;line-height:8.9px;color:#616165;left:675.10px;-webkit-text-stroke:0.1px currentColor;">Initial Phone Call</div>
<div class="t" style="top:550.00px;font-size:8.9px;line-height:8.9px;color:#616165;left:966.70px;-webkit-text-stroke:0.1px currentColor;">Not Started</div>
<div class="t" style="top:550.00px;font-size:8.9px;line-height:8.9px;color:#616165;left:1054.40px;-webkit-text-stroke:0.1px currentColor;">30/08/2018</div>
<div class="t" style="top:565.00px;font-size:8.9px;line-height:8.9px;color:#616165;left:616.50px;-webkit-text-stroke:0.1px currentColor;">156</div>
<div class="t" style="top:565.00px;font-size:8.9px;line-height:8.9px;color:#616165;left:675.10px;-webkit-text-stroke:0.1px currentColor;">Call Customers to see if interested</div>
<div class="t" style="top:565.00px;font-size:8.9px;line-height:8.9px;color:#616165;left:966.70px;-webkit-text-stroke:0.1px currentColor;">Not Started</div>
<div class="t" style="top:565.00px;font-size:8.9px;line-height:8.9px;color:#616165;left:1054.40px;-webkit-text-stroke:0.1px currentColor;">12/09/2018</div>
<div class="t" style="top:580.00px;font-size:8.9px;line-height:8.9px;color:#616165;left:616.50px;-webkit-text-stroke:0.1px currentColor;">157</div>
<div class="t" style="top:580.00px;font-size:8.9px;line-height:8.9px;color:#616165;left:675.10px;-webkit-text-stroke:0.1px currentColor;">Call Customers to see if interested</div>
<div class="t" style="top:580.00px;font-size:8.9px;line-height:8.9px;color:#616165;left:966.70px;-webkit-text-stroke:0.1px currentColor;">In Progress</div>
<div class="t" style="top:580.00px;font-size:8.9px;line-height:8.9px;color:#616165;left:1054.40px;-webkit-text-stroke:0.1px currentColor;">12/09/2018</div>
<div class="t" style="top:595.00px;font-size:8.9px;line-height:8.9px;color:#616165;left:616.50px;-webkit-text-stroke:0.1px currentColor;">286</div>
<div class="t" style="top:595.00px;font-size:8.9px;line-height:8.9px;color:#616165;left:675.10px;-webkit-text-stroke:0.1px currentColor;">Call Customers to see if interested</div>
<div class="t" style="top:595.00px;font-size:8.9px;line-height:8.9px;color:#616165;left:966.70px;-webkit-text-stroke:0.1px currentColor;">In Progress</div>
<div class="t" style="top:595.00px;font-size:8.9px;line-height:8.9px;color:#616165;left:1054.40px;-webkit-text-stroke:0.1px currentColor;">12/09/2018</div>
<div class="t" style="top:610.00px;font-size:8.9px;line-height:8.9px;color:#616165;left:616.50px;-webkit-text-stroke:0.1px currentColor;">68</div>
<div class="t" style="top:610.00px;font-size:8.9px;line-height:8.9px;color:#616165;left:675.10px;-webkit-text-stroke:0.1px currentColor;">Call Customers to see if interested</div>
<div class="t" style="top:610.00px;font-size:8.9px;line-height:8.9px;color:#616165;left:966.70px;-webkit-text-stroke:0.1px currentColor;">Not Started</div>
<div class="t" style="top:610.00px;font-size:8.9px;line-height:8.9px;color:#616165;left:1054.40px;-webkit-text-stroke:0.1px currentColor;">12/09/2018</div>
<svg style="left:0;top:0" width="1266" height="712"><circle cx="541.2" cy="452.20" r="3.3" fill="#e8462c"/><circle cx="581.2" cy="452.20" r="3.3" fill="#e8462c"/><circle cx="541.2" cy="467.12" r="3.3" fill="#2e8b36"/><circle cx="581.2" cy="467.12" r="3.3" fill="#e8462c"/><circle cx="541.2" cy="482.04" r="3.3" fill="#e8462c"/><circle cx="581.2" cy="482.04" r="3.3" fill="#2e8b36"/><circle cx="541.2" cy="496.96" r="3.3" fill="#e8462c"/><circle cx="581.2" cy="496.96" r="3.3" fill="#2e8b36"/><circle cx="541.2" cy="511.88" r="3.3" fill="#e8462c"/><circle cx="581.2" cy="511.88" r="3.3" fill="#2e8b36"/><circle cx="541.2" cy="526.80" r="3.3" fill="#e8462c"/><circle cx="581.2" cy="526.80" r="3.3" fill="#2e8b36"/><circle cx="541.2" cy="541.72" r="3.3" fill="#e8462c"/><circle cx="581.2" cy="541.72" r="3.3" fill="#2e8b36"/><circle cx="541.2" cy="556.64" r="3.3" fill="#2e8b36"/><circle cx="581.2" cy="556.64" r="3.3" fill="#2e8b36"/><circle cx="541.2" cy="571.56" r="3.3" fill="#2e8b36"/><circle cx="581.2" cy="571.56" r="3.3" fill="#2e8b36"/><circle cx="541.2" cy="586.48" r="3.3" fill="#e8462c"/><circle cx="581.2" cy="586.48" r="3.3" fill="#e8462c"/><circle cx="541.2" cy="601.40" r="3.3" fill="#2e8b36"/><circle cx="581.2" cy="601.40" r="3.3" fill="#2e8b36"/><circle cx="541.2" cy="616.32" r="3.3" fill="#e8462c"/><circle cx="581.2" cy="616.32" r="3.3" fill="#2e8b36"/><circle cx="1156" cy="452.20" r="3.3" fill="#e8462c"/><circle cx="1156" cy="467.12" r="3.3" fill="#e8462c"/><circle cx="1156" cy="482.04" r="3.3" fill="#e8462c"/><circle cx="1156" cy="496.96" r="3.3" fill="#e8462c"/><circle cx="1156" cy="511.88" r="3.3" fill="#e8462c"/><circle cx="1156" cy="526.80" r="3.3" fill="#e8462c"/><circle cx="1156" cy="541.72" r="3.3" fill="#e8462c"/><circle cx="1156" cy="556.64" r="3.3" fill="#e8462c"/><circle cx="1156" cy="571.56" r="3.3" fill="#e8462c"/><circle cx="1156" cy="586.48" r="3.3" fill="#e8462c"/><circle cx="1156" cy="601.40" r="3.3" fill="#e8462c"/><circle cx="1156" cy="616.32" r="3.3" fill="#e8462c"/></svg>
<svg style="left:0;top:0" width="1266" height="712"><circle cx="541.8" cy="668" r="8.7" fill="#c9c6cc"/><circle cx="1077.3" cy="668" r="8.7" fill="#c9c6cc"/></svg>
<div class="t" style="top:664.00px;font-size:8.6px;line-height:8.6px;color:#505055;left:341.80px;width:400px;text-align:center;">1</div>
<div class="t" style="top:664.00px;font-size:8.6px;line-height:8.6px;color:#505055;left:359.00px;width:400px;text-align:center;">2</div>
<div class="t" style="top:664.00px;font-size:8.6px;line-height:8.6px;color:#505055;left:376.00px;width:400px;text-align:center;">3</div>
<div class="t" style="top:664.00px;font-size:8.6px;line-height:8.6px;color:#aaa;left:393.00px;width:400px;text-align:center;">&gt;</div>
<div class="t" style="top:664.00px;font-size:8.6px;line-height:8.6px;color:#505055;left:877.30px;width:400px;text-align:center;">1</div>
<div class="t" style="top:664.00px;font-size:8.6px;line-height:8.6px;color:#505055;left:894.30px;width:400px;text-align:center;">2</div>
<div class="t" style="top:664.00px;font-size:8.6px;line-height:8.6px;color:#505055;left:911.40px;width:400px;text-align:center;">3</div>
<div class="t" style="top:664.00px;font-size:8.6px;line-height:8.6px;color:#505055;left:928.50px;width:400px;text-align:center;">4</div>
<div class="t" style="top:664.00px;font-size:8.6px;line-height:8.6px;color:#505055;left:945.50px;width:400px;text-align:center;">5</div>
<div class="t" style="top:664.00px;font-size:8.6px;line-height:8.6px;color:#aaa;left:962.60px;width:400px;text-align:center;">&gt;</div>
</body></html>
